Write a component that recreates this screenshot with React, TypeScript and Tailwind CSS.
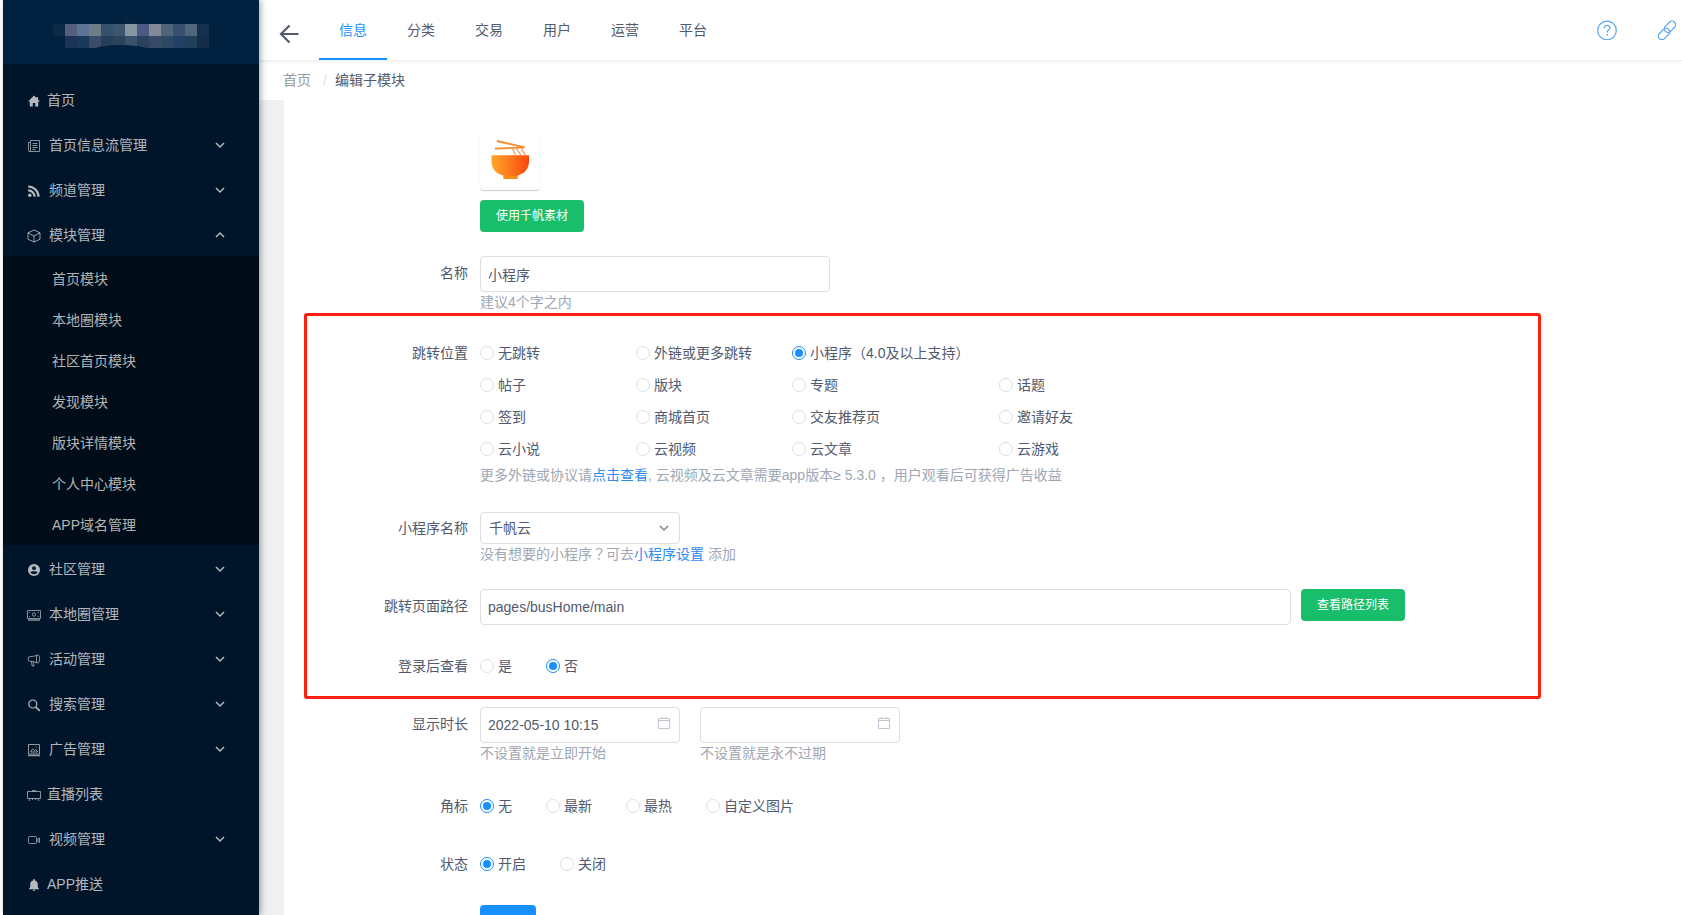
import { useState } from 'react';
import type { ReactNode } from 'react';
import clsx from 'clsx';

type IconProps = { children: ReactNode; className?: string };

function Icon({ children, className }: IconProps) {
  return (
    <svg
      viewBox="0 0 14 14"
      className={clsx('w-3.5 h-3.5 shrink-0', className)}
      fill="none"
      stroke="currentColor"
      strokeWidth={1}
      aria-hidden="true"
    >
      {children}
    </svg>
  );
}

const icons: Record<string, ReactNode> = {
  home: (
    <path
      d="M7 1.6 1 7.400h1.800v5.200h3V9h2.400v3.600h3V7.400H13l-2-2V3H9.500v1L7 1.600Z"
      fill="currentColor"
      stroke="none"
    />
  ),
  feed: (
    <g opacity={0.75}>
      <path d="M3.500 1.500h9v11h-10a1 1 0 0 1-1-1v-8h2zM3.500 3.500v8a1 1 0 0 1-1 1" />
      <path d="M5.500 4.500h5M5.500 6.500h5M5.500 8.500h5M5.500 10.500h3" />
    </g>
  ),
  rss: (
    <>
      <circle cx="2.800" cy="11.200" r="1.700" fill="currentColor" stroke="none" />
      <path d="M1.200 6.400a6.400 6.400 0 0 1 6.400 6.400M1.200 2.500a10.300 10.300 0 0 1 10.300 10.300" strokeWidth={2.200} />
    </>
  ),
  cube: (
    <path d="M7 1 13 3.800v6.400L7 13 1 10.200V3.800L7 1ZM1 3.800 7 7l6-3.200M7 7v6" opacity={0.85} />
  ),
  contact: (
    <>
      <circle cx="7" cy="7" r="6" fill="currentColor" stroke="none" />
      <circle cx="7" cy="5.200" r="1.900" fill="#001529" stroke="none" />
      <path d="M3.400 9.600c.8-1.800 6.400-1.800 7.200 0-1.600 2.200-5.600 2.200-7.200 0Z" fill="#001529" stroke="none" />
    </>
  ),
  cash: (
    <g opacity={0.75}>
      <path d="M.5 2.500h13v8H.5z" />
      <path d="M1 12h12" strokeWidth={1.500} />
      <circle cx="7" cy="6.500" r="1.700" />
      <path d="M2.500 4v1M11.500 4v1M2.500 8v1M11.500 8v1" />
    </g>
  ),
  megaphone: (
    <path
      d="M9.500 2.200C8 3 6.500 3.500 3.500 3.500a2.300 2.300 0 0 0 0 5c3 0 4.500.3 6 1.300zM9.500 2.200h2c1.600 1 1.600 6.500 0 7.600h-2M4.500 8.500l.6 4.500h1.800l-.4-4.500"
      opacity={0.75}
    />
  ),
  search: (
    <>
      <circle cx="5.800" cy="6" r="4" strokeWidth={1.200} />
      <path d="m8.800 9.200 4 3.600" strokeWidth={1.600} />
    </>
  ),
  image: (
    <g opacity={0.8}>
      <path d="M1.500 1.500h11v9.500h-11z" />
      <path d="M1 12.500h12" strokeWidth={1.500} />
      <path d="m3.500 9 2.200-3.200 1.800 2 1.200-1.300 2 2.500zM8.500 4h1" />
    </g>
  ),
  easel: (
    <path d="M.5 3.500h13v7H.5zM5.500 3.500V2.500h3v1M3 10.500l-.8 2.500M11 10.500l.8 2.500M5.500 10.500V12M8.500 10.500V12" opacity={0.75} />
  ),
  video: (
    <g opacity={0.75}>
      <rect x="1.500" y="3.500" width="8" height="7" rx="1" />
      <path d="m10.800 6 1.700-1v4.500l-1.700-1z" />
    </g>
  ),
  bell: (
    <path
      d="M7 13a1.400 1.400 0 0 0 1.400-1.200H5.600A1.400 1.400 0 0 0 7 13Zm3.800-3.700V6.200c0-2-1-3.400-2.900-3.800V2a.9.9 0 0 0-1.800 0v.4c-1.900.4-2.900 1.800-2.900 3.800v3.100L2 10.600v.7h10v-.7L10.800 9.300Z"
      fill="currentColor"
      stroke="none"
    />
  ),
};

function Chevron({ up, className }: { up?: boolean; className?: string }) {
  return (
    <svg viewBox="0 0 10 10" className={clsx('w-2.5 h-2.5', className)} fill="none" stroke="currentColor" strokeWidth={1.5} aria-hidden="true">
      <path d={up ? 'M1 7l4-4 4 4' : 'M1 3l4 4 4-4'} />
    </svg>
  );
}

const menu = [
  { label: '首页', icon: 'home' },
  { label: '首页信息流管理', icon: 'feed', group: true },
  { label: '频道管理', icon: 'rss', group: true },
  {
    label: '模块管理',
    icon: 'cube',
    group: true,
    children: ['首页模块', '本地圈模块', '社区首页模块', '发现模块', '版块详情模块', '个人中心模块', 'APP域名管理'],
  },
  { label: '社区管理', icon: 'contact', group: true },
  { label: '本地圈管理', icon: 'cash', group: true },
  { label: '活动管理', icon: 'megaphone', group: true },
  { label: '搜索管理', icon: 'search', group: true },
  { label: '广告管理', icon: 'image', group: true },
  { label: '直播列表', icon: 'easel' },
  { label: '视频管理', icon: 'video', group: true },
  { label: 'APP推送', icon: 'bell' },
];

const tabs = ['信息', '分类', '交易', '用户', '运营', '平台'];

const targets = [
  '无跳转', '外链或更多跳转', '小程序（4.0及以上支持）', '',
  '帖子', '版块', '专题', '话题',
  '签到', '商城首页', '交友推荐页', '邀请好友',
  '云小说', '云视频', '云文章', '云游戏',
];

const logoTop = ['#0a2a48', '#535f7c', '#5f7396', '#6e7d89', '#34506a', '#3d566e', '#8796a3', '#4a5a80', '#84899a', '#50657a', '#38506f', '#50677b', '#15304d'];
const logoBottom = ['#002140', '#1b3355', '#1a3a5c', '#3a4b68', '#243f58', '#2a445e', '#3a536a', '#2a415f', '#364a66', '#2b4a62', '#213f67', '#20405a', '#122c49'];

function Logo() {
  return (
    <svg width="156" height="30" viewBox="0 0 156 30" shapeRendering="crispEdges" aria-hidden="true">
      <rect x="72" y="0" width="12" height="6" fill="#05253f" />
      {logoTop.map((c, i) => (
        <rect key={i} x={i * 12} y="6" width="12" height="12" fill={c} />
      ))}
      {logoBottom.map((c, i) => (
        <rect key={i} x={i * 12} y="18" width="12" height="12" fill={c} />
      ))}
      <path d="M42 30c14-4 38-4 52 0z" fill="#002140" shapeRendering="auto" />
    </svg>
  );
}

function Sidebar() {
  return (
    <aside className="relative z-10 w-64 shrink-0 bg-[#001529] text-white/70 shadow-[2px_0_6px_rgba(0,21,41,0.35)]">
      <div className="h-16 bg-[#002140] flex items-start pt-[18px] pl-[50px]">
        <Logo />
      </div>
      <nav className="pt-3">
        {menu.map((item) => (
          <div key={item.label}>
            <a href="#" className="h-[45px] pt-[3px] pl-6 pr-[34px] flex items-center">
              <Icon className="mt-0.5">{icons[item.icon]}</Icon>
              <span className={item.group ? 'ml-2' : 'ml-1.5'}>{item.label}</span>
              {item.group && <Chevron up={!!item.children} className="ml-auto" />}
            </a>
            {item.children && (
              <ul className="bg-[#000c17] pt-0.5">
                {item.children.map((child) => (
                  <li key={child}>
                    <a href="#" className="h-[41px] pl-[49px] flex items-center">{child}</a>
                  </li>
                ))}
              </ul>
            )}
          </div>
        ))}
      </nav>
    </aside>
  );
}

function Header() {
  return (
    <header className="relative h-[61px] shrink-0 bg-white border-b border-[#eef0f2] shadow-[0_1px_4px_rgba(0,21,41,0.06)] flex items-start">
      <button type="button" aria-label="返回" className="ml-5 mt-6 w-5 h-5">
        <svg viewBox="0 0 20 20" fill="none" stroke="#515a6e" strokeWidth={2.2} aria-hidden="true">
          <path d="M19.500 10H2.500M10.500 1.500 2 10l8.500 8.500" />
        </svg>
      </button>
      <nav className="ml-5 flex">
        {tabs.map((tab, i) => (
          <a
            key={tab}
            href="#"
            className={clsx(
              'h-[60px] px-5 pt-0.5 flex items-center border-b-2',
              i === 0 ? 'text-[#1890ff] border-[#1890ff]' : 'border-transparent'
            )}
          >
            {tab}
          </a>
        ))}
      </nav>
      <div className="ml-auto mr-[5px] mt-5 flex gap-10 text-[#57a3f3]">
        <a href="#" aria-label="帮助">
          <svg width="20" height="20" viewBox="0 0 20 20" fill="none" stroke="currentColor" strokeWidth={1.2}>
            <circle cx="10" cy="10.500" r="9.300" />
            <path d="M7.200 8.200c0-3.600 5.700-3.600 5.700-.2 0 2.100-2.700 2-2.700 4.400" />
            <circle cx="10.200" cy="14.800" r=".9" fill="currentColor" stroke="none" />
          </svg>
        </a>
        <a href="#" aria-label="链接">
          <svg width="20" height="20" viewBox="0 0 20 20" fill="none" stroke="currentColor" strokeWidth={1.2}>
            <rect x="6.500" y="3.200" width="13" height="7.200" rx="3.600" transform="rotate(-45 13 6.800)" />
            <rect x="0.500" y="10.400" width="13" height="7.200" rx="3.600" transform="rotate(-45 7 14)" />
          </svg>
        </a>
      </div>
    </header>
  );
}

// full-width punctuation is centred in its cell only in the TC face
function Punct({ children }: { children: ReactNode }) {
  return <span className="font-['Noto_Sans_CJK_TC',sans-serif] leading-none">{children}</span>;
}

function withPunct(text: string) {
  return text.split(/([（）？])/).map((part, i) => (i % 2 ? <Punct key={i}>{part}</Punct> : part));
}

type FormItemProps = {
  label?: string;
  htmlFor?: string;
  boxed?: boolean;
  short?: boolean;
  className?: string;
  children: ReactNode;
};

function FormItem({ label, htmlFor, boxed, short, className, children }: FormItemProps) {
  const labelClass = clsx(
    'shrink-0 flex items-center justify-end',
    boxed ? 'w-[161px]' : 'w-[184px]',
    short ? 'h-8' : 'h-[34px]'
  );
  return (
    <div className={clsx('flex gap-3', className)}>
      {htmlFor ? (
        <label htmlFor={htmlFor} className={labelClass}>{label}</label>
      ) : (
        <span className={labelClass}>{label}</span>
      )}
      <div className="flex-1 min-w-0">{children}</div>
    </div>
  );
}

type RadioProps = { name: string; label: string; checked: boolean; onChange: () => void };

function Radio({ name, label, checked, onChange }: RadioProps) {
  return (
    <label className="flex items-center gap-1">
      <input
        type="radio"
        name={name}
        checked={checked}
        onChange={onChange}
        className="appearance-none w-3.5 h-3.5 p-0.5 rounded-full border border-[#dcdee2] bg-clip-content checked:border-[#1890ff] checked:bg-[#1890ff]"
      />
      <span>{withPunct(label)}</span>
    </label>
  );
}

function RadioRow({ name, label, options, initial }: { name: string; label: string; options: string[]; initial: string }) {
  const [value, setValue] = useState(initial);
  return (
    <div role="radiogroup" aria-label={label} className="h-[34px] flex items-center gap-[34px]">
      {options.map((o) => (
        <Radio key={o} name={name} label={o} checked={value === o} onChange={() => setValue(o)} />
      ))}
    </div>
  );
}

function Hint({ children }: { children: ReactNode }) {
  return <p className="leading-[21px] text-[#9ea7b4]">{children}</p>;
}

function DateField({ id, label, value, hint }: { id: string; label: string; value: string; hint: string }) {
  return (
    <div className="w-[200px]">
      <div className="relative">
        <input
          id={id}
          type="text"
          aria-label={label}
          defaultValue={value}
          className="block w-full h-9 pl-[7px] pr-8 border border-[#dcdee2] rounded"
        />
        <svg viewBox="0 0 14 14" className="absolute right-[9px] top-[9px] w-3.5 h-3.5" fill="none" stroke="#c0c4d0" aria-hidden="true">
          <path d="M1.500 2.500h11v10h-11zM1.500 4.500h11M4.500 1v1.500M9.500 1v1.500" />
        </svg>
      </div>
      <Hint>{hint}</Hint>
    </div>
  );
}

function BowlPicture() {
  return (
    <div className="w-[60px] h-[60px] rounded bg-white shadow-[0_1px_1px_rgba(0,0,0,0.2)]">
      <svg viewBox="0 0 60 60" aria-hidden="true">
        <defs>
          <linearGradient id="bowl" x1="0" x2="1" y1="0" y2="0">
            <stop offset="0" stopColor="#ffa62b" />
            <stop offset="1" stopColor="#f9480a" />
          </linearGradient>
        </defs>
        <path d="M11.500 25.300h37.500v6c0 8-5 12.700-11.500 14.200v3h-14v-3C16.500 44 11.500 39.300 11.500 31.300z" fill="url(#bowl)" />
        <path d="M23.500 46h14v3h-14z" fill="#ff8d12" />
        <path d="M17 10l28 6.500-.6 1.800L16.600 12zM15 17.700l29.500-1.200v1.800L15 19.600z" fill="#fb8c2e" />
        <path d="M33 18c-1 3 2 4 2.500 7M37 18c-1 3 3 4 3.500 7M42 18c-1 3 2.500 4 3 7" fill="none" stroke="#fb9050" strokeWidth={1.2} />
      </svg>
    </div>
  );
}

const greenButton = 'shrink-0 h-8 px-4 rounded bg-[#19be6b] text-xs text-white';

export default function App() {
  const [target, setTarget] = useState(targets[2]);

  return (
    <div className="h-screen overflow-hidden flex pl-[3px] bg-white text-sm text-[#515a6e] font-['Liberation_Sans','Noto_Sans_CJK_SC',sans-serif]">
      <Sidebar />
      <div className="flex-1 min-w-0 flex flex-col">
        <Header />
        <nav className="h-[39px] shrink-0 pl-6 pb-0.5 flex items-center text-[#999]" aria-label="面包屑">
          <a href="#">首页</a>
          <span className="w-6 pl-1 text-center text-[#dcdee2]">/</span>
          <span className="text-[#515a6e]">编辑子模块</span>
        </nav>
        <main className="flex-1 min-h-0 pl-[25px] bg-[#f0f0f0] overflow-hidden">
          <form className="min-h-full bg-white pt-[30px]">
            <FormItem className="mb-6">
              <BowlPicture />
              <button type="button" className={clsx(greenButton, 'mt-2.5 block')}>使用千帆素材</button>
            </FormItem>
            <FormItem label="名称" htmlFor="name">
              <input id="name" type="text" defaultValue="小程序" className="block w-[350px] h-9 px-[7px] border border-[#dcdee2] rounded" />
              <Hint>建议4个字之内</Hint>
            </FormItem>

            <section className="ml-5 mr-[141px] pt-[21px] pb-[13px] border-[3px] border-[#ff1e10] rounded-[3px]">
              <FormItem label="跳转位置" boxed short className="mb-[26px]">
                <div role="radiogroup" aria-label="跳转位置" className="grid grid-cols-[156px_156px_207px_auto] auto-rows-[32px]">
                  {targets.map((t, i) =>
                    t ? (
                      <Radio key={t} name="target" label={t} checked={target === t} onChange={() => setTarget(t)} />
                    ) : (
                      <span key={i} />
                    )
                  )}
                </div>
                <Hint>
                  更多外链或协议请<a href="#" className="text-[#2d8cf0]">点击查看</a>, 云视频及云文章需要app版本≥ 5.3.0 ，用户观看后可获得广告收益
                </Hint>
              </FormItem>
              <FormItem label="小程序名称" htmlFor="mini" boxed short className="mb-6">
                <div className="relative w-[200px]">
                  <select id="mini" className="appearance-none block w-full h-8 pl-2 pr-6 bg-white border border-[#dcdee2] rounded">
                    <option>千帆云</option>
                  </select>
                  <Chevron className="absolute right-[11px] top-[11px] text-[#808695] pointer-events-none" />
                </div>
                <Hint>
                  {withPunct('没有想要的小程序？可去')}
                  <a href="#" className="text-[#2d8cf0]">小程序设置</a> 添加
                </Hint>
              </FormItem>
              <FormItem label="跳转页面路径" htmlFor="path" boxed className="mb-6">
                <div className="flex items-start gap-2.5 pr-[133px]">
                  <input id="path" type="text" defaultValue="pages/busHome/main" className="flex-1 min-w-0 h-9 px-[7px] border border-[#dcdee2] rounded" />
                  <button type="button" className={greenButton}>查看路径列表</button>
                </div>
              </FormItem>
              <FormItem label="登录后查看" boxed>
                <RadioRow name="login" label="登录后查看" options={['是', '否']} initial="否" />
              </FormItem>
            </section>

            <FormItem label="显示时长" htmlFor="start" className="mt-2 mb-[25px]">
              <div className="flex gap-5">
                <DateField id="start" label="开始时间" value="2022-05-10 10:15" hint="不设置就是立即开始" />
                <DateField id="end" label="结束时间" value="" hint="不设置就是永不过期" />
              </div>
            </FormItem>
            <FormItem label="角标" className="mb-6">
              <RadioRow name="badge" label="角标" options={['无', '最新', '最热', '自定义图片']} initial="无" />
            </FormItem>
            <FormItem label="状态" className="mb-6">
              <RadioRow name="status" label="状态" options={['开启', '关闭']} initial="开启" />
            </FormItem>
            <FormItem>
              <button type="submit" aria-label="提交" className="block h-8 w-14 rounded bg-[#1890ff]" />
            </FormItem>
          </form>
        </main>
      </div>
    </div>
  );
}
